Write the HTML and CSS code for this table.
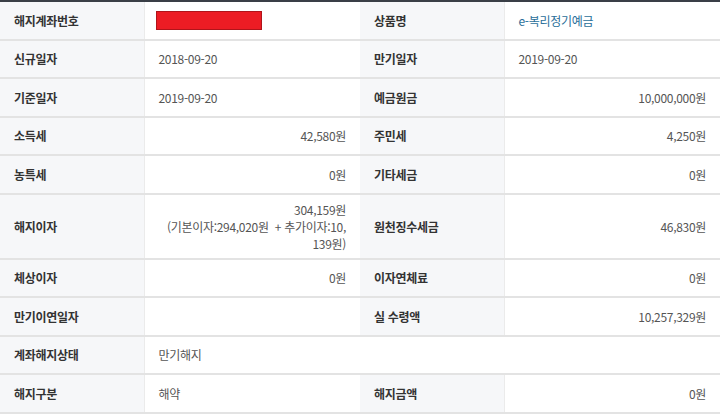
FILE: index.html
```html
<!DOCTYPE html>
<html lang="ko">
<head>
<meta charset="utf-8">
<link rel="stylesheet" href="styles.css">
</head>
<body>
<table class="info">
  <colgroup>
    <col class="c-lab"><col class="c-val"><col class="c-lab"><col class="c-val">
  </colgroup>
  <tbody>
    <tr>
      <th>해지계좌번호</th><td><span class="mask"></span></td>
      <th>상품명</th><td><span class="link">e-복리정기예금</span></td>
    </tr>
    <tr>
      <th>신규일자</th><td>2018-09-20</td>
      <th>만기일자</th><td>2019-09-20</td>
    </tr>
    <tr>
      <th>기준일자</th><td>2019-09-20</td>
      <th>예금원금</th><td class="num">10,000,000원</td>
    </tr>
    <tr>
      <th>소득세</th><td class="num">42,580원</td>
      <th>주민세</th><td class="num">4,250원</td>
    </tr>
    <tr>
      <th>농특세</th><td class="num">0원</td>
      <th>기타세금</th><td class="num">0원</td>
    </tr>
    <tr class="tall">
      <th>해지이자</th><td class="num">304,159원<br>(기본이자:294,020원&nbsp; + 추가이자:10,<br>139원)</td>
      <th>원천징수세금</th><td class="num">46,830원</td>
    </tr>
    <tr>
      <th>체상이자</th><td class="num">0원</td>
      <th>이자연체료</th><td class="num">0원</td>
    </tr>
    <tr>
      <th>만기이연일자</th><td></td>
      <th>실 수령액</th><td class="num">10,257,329원</td>
    </tr>
    <tr>
      <th>계좌해지상태</th><td>만기해지</td>
      <td class="blank" colspan="2"></td>
    </tr>
    <tr>
      <th>해지구분</th><td>해약</td>
      <th>해지금액</th><td class="num">0원</td>
    </tr>
  </tbody>
</table>
</body>
</html>
```

FILE: styles.css
```css
html, body {
  margin: 0;
  padding: 0;
  background: #ffffff;
}

body {
  font-family: "Noto Sans CJK KR", "Noto Sans", sans-serif;
  font-size: 12px;
  color: #555;
}

.info {
  width: 720px;
  border-collapse: collapse;
  table-layout: fixed;
  border-top: 2px solid #3a3f47;
}

.c-lab { width: 144px; }
.c-val { width: 216px; }

.info th,
.info td {
  height: 36.5px;
  padding: 0 14px;
  border-bottom: 2px solid #e3e3e3;
  vertical-align: middle;
  line-height: 17px;
  letter-spacing: -0.3px;
}

.info th {
  background: #f6f7f9;
  color: #333;
  font-weight: bold;
  text-align: left;
  border-right: 1px solid #ebebeb;
}

.info td {
  background: #fff;
  text-align: left;
}

.info td.num {
  text-align: right;
}

.info tr.tall th,
.info tr.tall td {
  height: 51px;
  padding-top: 6px;
  padding-bottom: 6px;
}

.info td.blank {
  background: #fff;
}

.mask {
  display: inline-block;
  width: 104px;
  height: 17px;
  background: #ec1c24;
  border: 1px solid #b0141a;
  vertical-align: middle;
  margin-left: -3px;
}

.link {
  color: #2a6f9a;
}
```
